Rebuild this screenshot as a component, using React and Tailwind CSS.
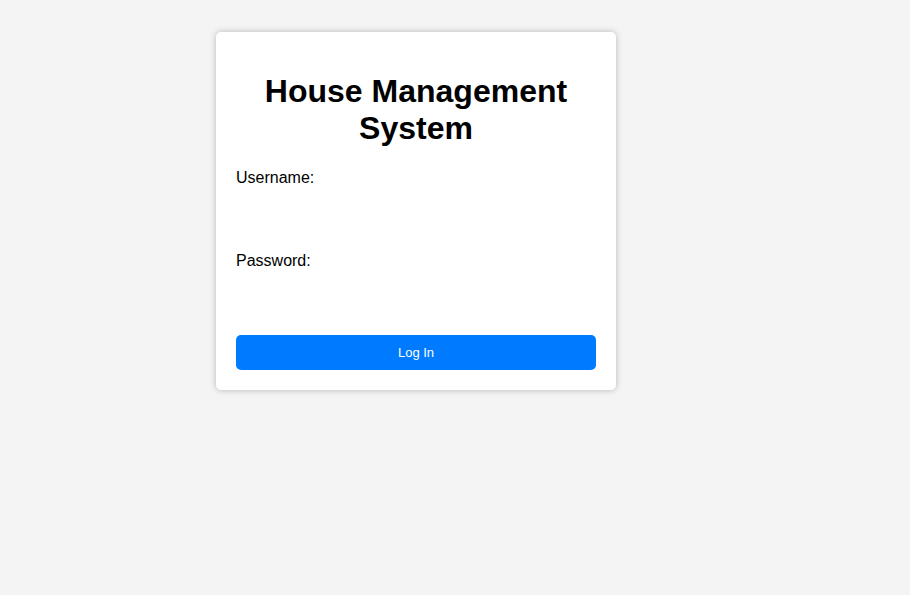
export default function App() {
  return (
    <div className="min-h-[595px] bg-[#f4f4f4] pt-[32px] font-['Liberation_Sans',Arial,sans-serif]">
      <div className="ml-[216px] w-[400px] rounded-[5px] bg-white p-[20px] shadow-[0_0_6px_rgba(0,0,0,0.25)]">
        <h1 className="mt-[21px] mb-[22px] text-center text-[32px] font-bold leading-[37px] text-black">House Management System</h1>
        <form className="flex flex-col">
          <label className="text-[16px] leading-[18px] text-black">Username:</label>
          <input type="text" className="my-[10px] h-[45px] border-0 bg-transparent outline-none" />
          <label className="text-[16px] leading-[18px] text-black">Password:</label>
          <input type="password" className="my-[10px] h-[42px] border-0 bg-transparent outline-none" />
          <button type="button" className="mt-[3px] h-[35px] w-full rounded-[5px] bg-[#007bff] text-[13px] text-white">Log In</button>
        </form>
      </div>
    </div>
  )
}
